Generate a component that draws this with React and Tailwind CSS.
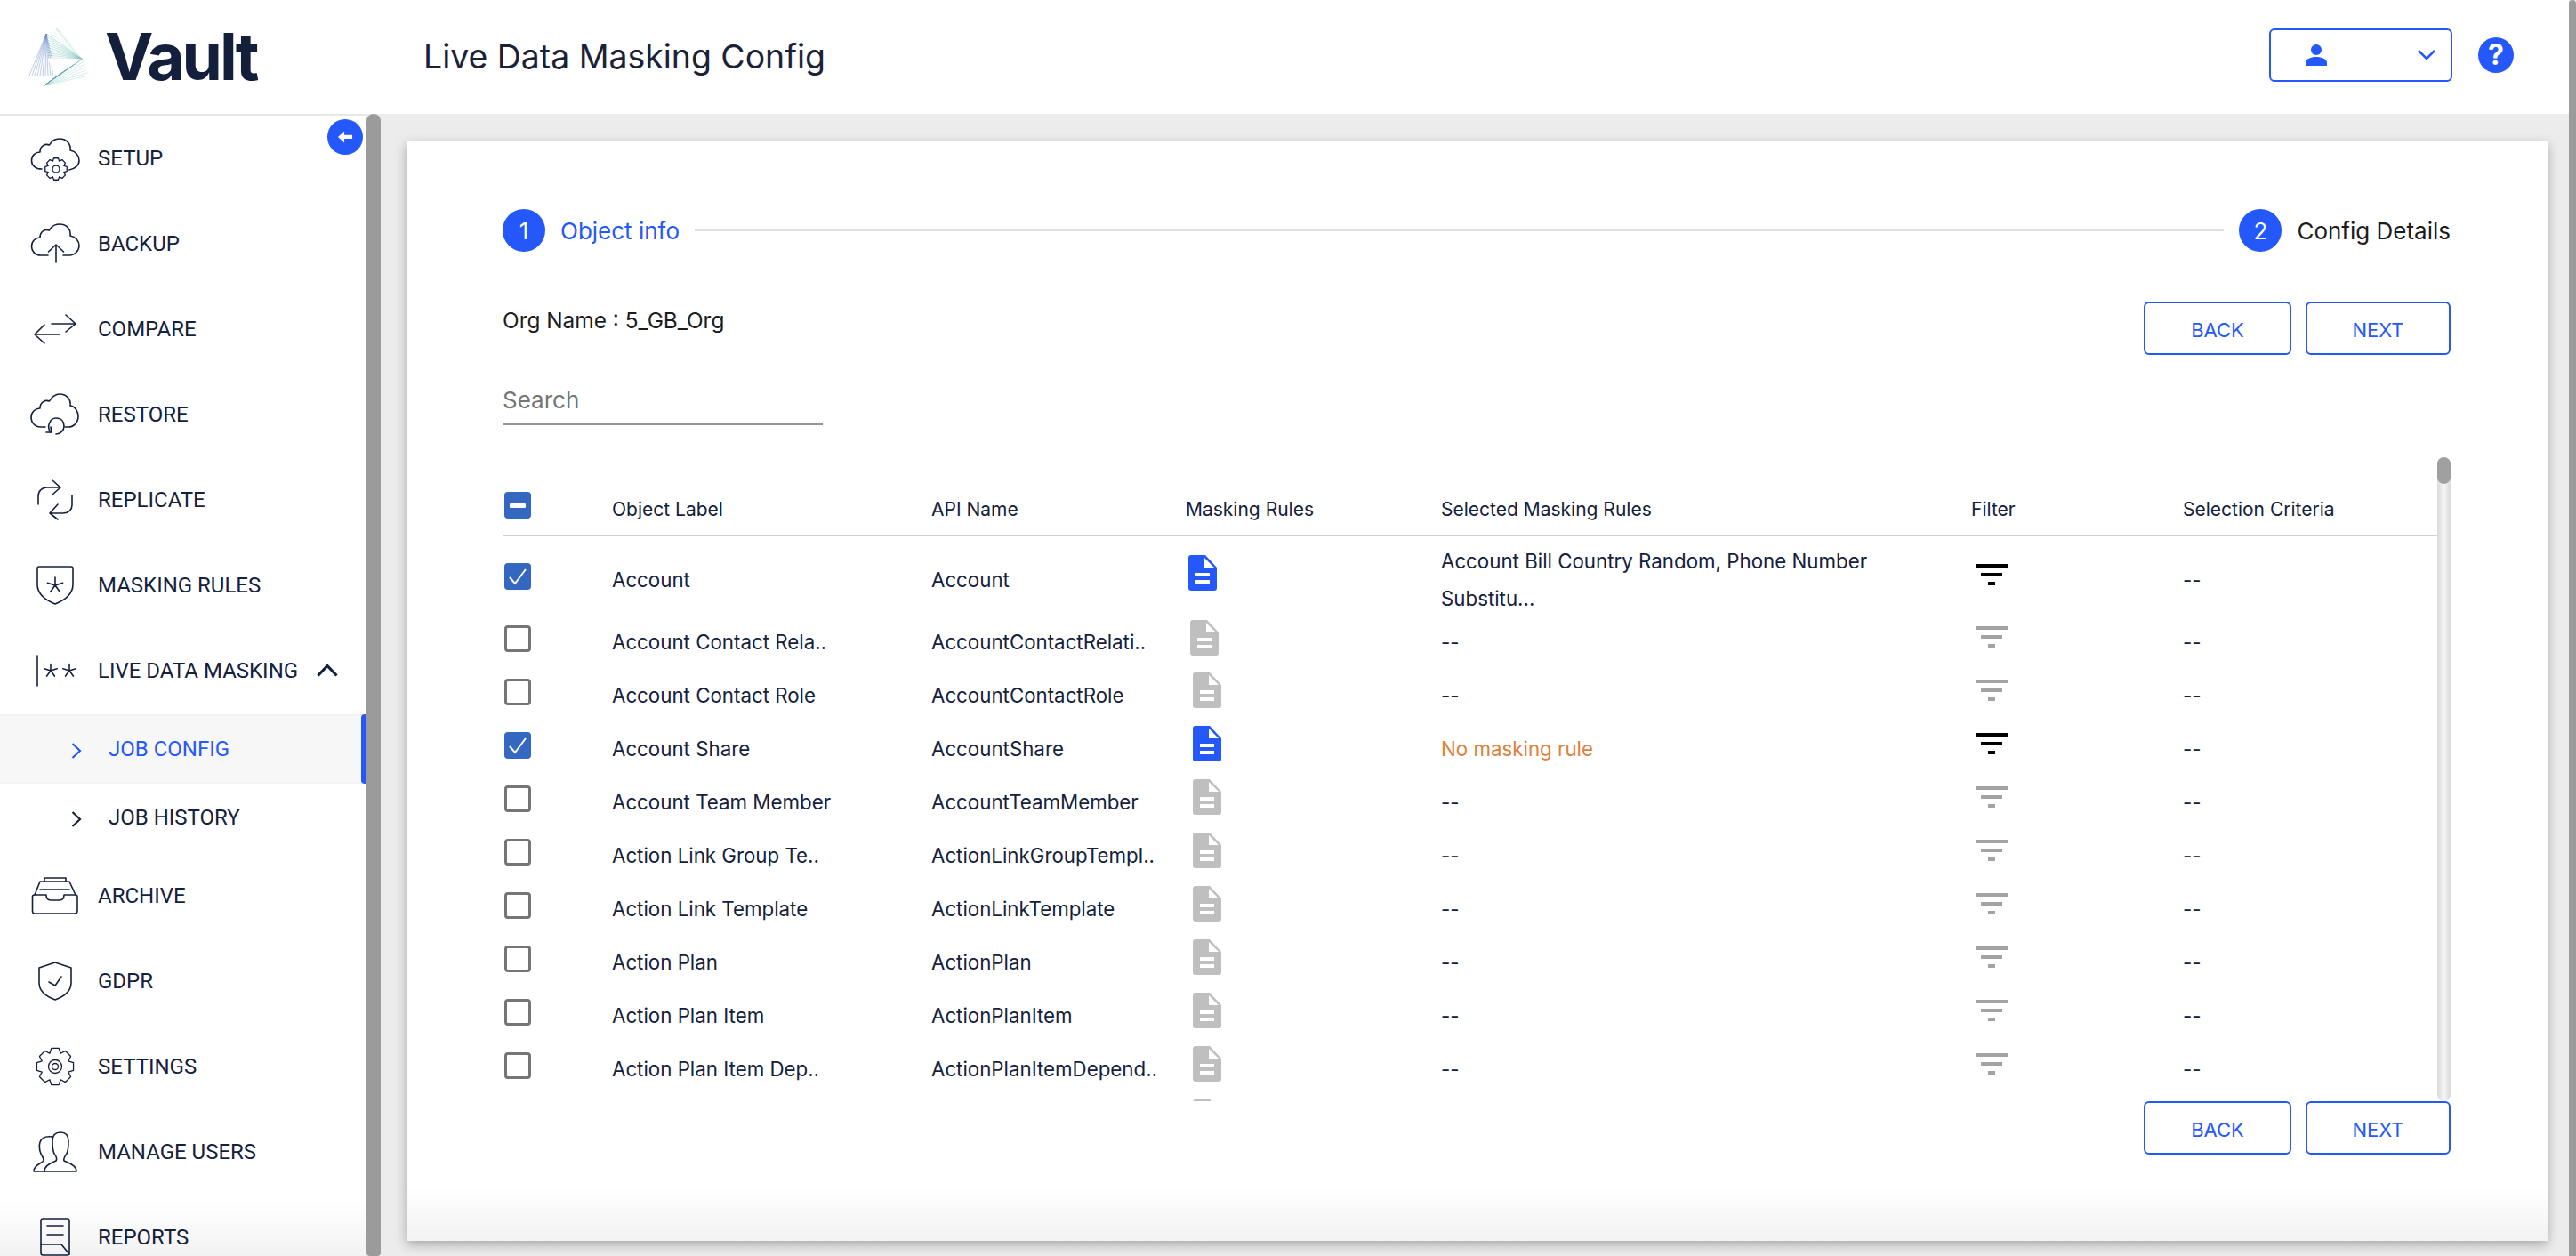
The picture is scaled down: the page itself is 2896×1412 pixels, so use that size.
import React from 'react';

const BLUE = '#2558fb';

// outline of a cog, used by the setup and settings icons
const gearPath = (cx, cy, outer, inner, teeth = 8) => {
    const pts = [];
    const step = (Math.PI * 2) / teeth;
    for (let i = 0; i < teeth; i++) {
        const a = i * step - Math.PI / 2;
        [
            [inner, -0.5],
            [outer, -0.26],
            [outer, 0.26],
            [inner, 0.5],
        ].forEach(([r, k]) => {
            pts.push(`${(cx + r * Math.cos(a + k * step)).toFixed(2)} ${(cy + r * Math.sin(a + k * step)).toFixed(2)}`);
        });
    }
    return `M${pts.join('L')}Z`;
};

const Star = ({ cx, cy, r }) => {
    const d = [0, 1, 2, 3, 4]
        .map((i) => {
            const a = (i * 2 * Math.PI) / 5 - Math.PI / 2;
            return `M${cx} ${cy}L${(cx + r * Math.cos(a)).toFixed(2)} ${(cy + r * Math.sin(a)).toFixed(2)}`;
        })
        .join('');
    return <path d={d} />;
};

// logo is three fans of thin lines turning round a small triangle
const fans = [
    { apex: [60, 35], from: [20, 7], to: [21, 34], color: '#6dbdb0', width: 0.4, n: 10 },
    { apex: [60, 35], from: [20, 7], to: [30, 0], color: '#a5d8cc', width: 0.3, n: 4 },
    { apex: [30, 0], from: [36, 1], to: [54, 30], color: '#b5e0d6', width: 0.3, n: 6 },
    { apex: [20, 7], from: [1, 54], to: [31, 55], color: '#5a7fc0', width: 0.4, n: 11 },
    { apex: [18, 65], from: [31, 55], to: [61, 35], color: '#4f8fb5', width: 0.4, n: 9 },
    { apex: [18, 65], from: [61, 35], to: [68, 54], color: '#7fc8bb', width: 0.3, n: 7 },
];

const Logo = () => (
    <svg viewBox="0 0 70 66" fill="none" className="w-[70px] h-[66px] shrink-0">
        {fans.map((fan, f) =>
            Array.from({ length: fan.n }, (_, i) => {
                const t = i / (fan.n - 1);
                return (
                    <line
                        key={`${f}-${i}`}
                        x1={fan.apex[0]}
                        y1={fan.apex[1]}
                        x2={fan.from[0] + (fan.to[0] - fan.from[0]) * t}
                        y2={fan.from[1] + (fan.to[1] - fan.from[1]) * t}
                        stroke={fan.color}
                        strokeWidth={fan.width}
                    />
                );
            })
        )}
        <path d="M21.500 34.500 H43 L31 54.500 Z" fill="#fff" />
    </svg>
);

const NavIcon = ({ children }) => (
    <svg
        viewBox="0 0 60 60"
        fill="none"
        stroke="#14213d"
        strokeWidth="1.6"
        strokeLinecap="round"
        strokeLinejoin="round"
        className="w-[60px] h-[60px] shrink-0 mt-[1px]"
    >
        {children}
    </svg>
);

const icons = {
    setup: (
        <>
            <path d="M15 42 C8 42 3.5 38 3.5 32.5 C3.5 27 8 23 13 23 C13 16 19 13 23.500 15 C26 10 31 8 35 8 C43 8 48 14 47 21 C53 22 57 27 57 32.500 C57 38 52 42 46 43" />
            <path d={gearPath(31, 42, 12.5, 9.5)} strokeWidth="1.3" />
            <circle cx="31" cy="42" r="4" strokeWidth="1.3" />
        </>
    ),
    backup: (
        <>
            <path d="M22 43 H14 C7 43 3.500 38 3.500 33 C3.500 27 8 23 13 23 C13 16 19 13 23.500 15 C26 10 31 8 35 8 C43 8 48 14 47 21 C53 22 57 27 57 32 C57 38 52 43 46 43 H39" />
            <path d="M31 31 V51 M22.500 39 L31 31 L39.500 39" />
        </>
    ),
    compare: <path d="M26 24 H53 M42 14 L53 24 L42 33 M35 36 H7 M18 25 L7 36 L18 46" />,
    restore: (
        <>
            <path d="M19 44 H14 C7 44 3 39 3 33 C3 27 8 23 13 23 C13 16 19 13 23.500 15 C26 10 31 7 35 7 C43 7 48 13 47 20 C53 21 56 27 56 32 C56 39 51 44 45 44 H41" />
            <path d="M25 50 C20 44 24 34 31 34 C37 34 40 38 40 43 C40 48 36 52 31 52" />
            <path d="M20 50 H26 L25 44" />
        </>
    ),
    replicate: <path d="M11 35 V26 C11 20 15 16 21 16 H36 M27 8 L36 16 L27 24 M49 25 V36 C49 41 45 45 39 45 H24 M33 35 L24 45 L33 52" />,
    masking: (
        <>
            <path d="M12 9 H48 C49 9 50 10 50 11 V29 C50 40 40 47 30 51 C20 47 10 40 10 29 V11 C10 10 11 9 12 9 Z" />
            <Star cx={30} cy={30} r={9} />
        </>
    ),
    live: (
        <>
            <path d="M10 13 V47" />
            <Star cx={25} cy={30} r={7.5} />
            <Star cx={46} cy={30} r={7.5} />
        </>
    ),
    archive: (
        <>
            <path d="M7 29 L13 14 H46 L53 29" />
            <path d="M18 14 V10 H42 V14 M13 23 H46" />
            <path d="M4.500 31 C4.500 30 5 29 7 29 H20 C20 33 22 35 25 35 H35 C38 35 40 33 40 29 H53 C54 29 55 30 55 31 V47 C55 49 54 50 52 50 H7 C5 50 4.500 49 4.500 47 Z" />
        </>
    ),
    gdpr: (
        <>
            <path d="M30 9 L48 15 V32 C48 42 38 48 30 51 C22 48 12 42 12 32 V15 Z" />
            <path d="M23 31 L30 35 L37 25" />
        </>
    ),
    settings: (
        <>
            <path d={gearPath(30, 30, 21, 16)} strokeWidth="1.3" />
            <circle cx="30" cy="30" r="7.500" strokeWidth="1.3" />
            <circle cx="30" cy="30" r="3.500" strokeWidth="1.3" />
        </>
    ),
    users: (
        <>
            <path d="M18 52 C18 45 25 43 31 40 C33 37 31 35 29 32 C27 28 27 24 27 18 C27 11 31 8 36 8 C41 8 45 11 45 18 C45 24 45 28 43 32 C41 35 39 37 40 40 C46 43 54 45 54 52 Z" />
            <path d="M18 52 H6 C6 46 12 44 17 40 C17 37 16 35 14 32 C12 28 12 22 13 19 C15 13 20 12 27 13" />
        </>
    ),
    reports: (
        <>
            <rect x="14" y="9" width="32" height="41" rx="2.500" />
            <path d="M21 17 H39 M21 27 H39 M14 38 H37 L46 49" />
        </>
    ),
};

const Chevron = ({ color }) => (
    <svg viewBox="0 0 12 20" fill="none" stroke={color} strokeWidth="2.2" className="w-3 h-5 shrink-0 mt-1">
        <path d="M1.500 2 L10 10 L1.500 18" />
    </svg>
);

const NavItem = ({ icon, label, children }) => (
    <div className="h-24 flex items-center pl-8 pt-[3px] text-[24px] text-[#14213d] shrink-0">
        <NavIcon>{icons[icon]}</NavIcon>
        <span className="ml-[18px]">{label}</span>
        {children}
    </div>
);

const Sidebar = () => (
    <div className="relative w-[412px] h-full bg-white overflow-hidden flex flex-col shrink-0 font-['Roboto',sans-serif] shadow-[inset_0_2px_0_#e8e8e8]">
        <button className="absolute left-[368px] top-[6px] w-10 h-10 rounded-full flex items-center justify-center" style={{ background: BLUE }}>
            <svg viewBox="0 0 18 14" className="w-[17px] h-[14px]" fill="#fff">
                <path d="M0 7 L7.500 0 V4.500 H17 V9 H7.500 V14 Z" />
            </svg>
        </button>
        <NavItem icon="setup" label="SETUP" />
        <NavItem icon="backup" label="BACKUP" />
        <NavItem icon="compare" label="COMPARE" />
        <NavItem icon="restore" label="RESTORE" />
        <NavItem icon="replicate" label="REPLICATE" />
        <NavItem icon="masking" label="MASKING RULES" />
        <NavItem icon="live" label="LIVE DATA MASKING">
            <svg viewBox="0 0 24 15" fill="none" stroke="#14213d" strokeWidth="3.200" className="w-6 h-[15px] absolute left-[356px]">
                <path d="M1.500 13.500 L12 2.500 L22.500 13.500" />
            </svg>
        </NavItem>
        <div className="relative h-[78px] mt-[3px] shrink-0 flex items-center pl-20 gap-[30px] text-[24px] bg-[#f7f7f7] border-y-2 border-[#f2f2f2]" style={{ color: BLUE }}>
            <Chevron color={BLUE} />
            <span>JOB CONFIG</span>
            <span className="absolute right-0 -top-[2px] -bottom-[2px] w-[6px] rounded-l-[4px]" style={{ background: BLUE }} />
        </div>
        <div className="h-[76px] shrink-0 flex items-center pl-20 gap-[30px] text-[24px] text-[#14213d]">
            <Chevron color="#14213d" />
            <span>JOB HISTORY</span>
        </div>
        <NavItem icon="archive" label="ARCHIVE" />
        <NavItem icon="gdpr" label="GDPR" />
        <NavItem icon="settings" label="SETTINGS" />
        <NavItem icon="users" label="MANAGE USERS" />
        <NavItem icon="reports" label="REPORTS" />
        <div className="absolute left-0 right-0 bottom-0 h-[62px] bg-gradient-to-b from-transparent to-black/5 pointer-events-none" />
    </div>
);

const DocIcon = ({ active, className }) => (
    <svg viewBox="0 0 32 40" className={`w-8 h-10 ${className}`}>
        <path
            d="M3 0 H19 L32 14 V37 A3 3 0 0 1 29 40 H3 A3 3 0 0 1 0 37 V3 A3 3 0 0 1 3 0 Z"
            fill={active ? BLUE : '#bfbfbf'}
        />
        <path d="M18 3 V14 H29 Z M8 20 H24 V24 H8 Z M8 28 H24 V32 H8 Z" fill="#fff" />
    </svg>
);

const FilterIcon = ({ active }) => (
    <svg viewBox="0 0 36 24" className="w-9 h-6 ml-[5px] mb-[12px]" fill={active ? '#000' : '#a3a3a3'}>
        <path d="M0 0 H36 V4 H0 Z M6 10 H30 V14 H6 Z M14 20 H22 V24 H14 Z" />
    </svg>
);

const Checkbox = ({ checked, minus, className = '' }) => {
    if (checked || minus) {
        return (
            <span className={`w-[30px] h-[30px] ml-[2px] rounded-[4px] bg-[#3367c0] flex items-center justify-center ${className}`}>
                {minus ? (
                    <span className="w-[18px] h-[5px] rounded-[1px] bg-white" />
                ) : (
                    <svg viewBox="0 0 30 30" className="w-[30px] h-[30px]" fill="none" stroke="#fff" strokeWidth="2">
                        <path d="M6 16 L12 23 L24 7" />
                    </svg>
                )}
            </span>
        );
    }
    return <span className={`block w-[30px] h-[30px] ml-[2px] rounded-[4px] border-[3px] border-[#757575] ${className}`} />;
};

const COLS = 'grid grid-cols-[123px_359px_286px_287px_596px_238px_1fr] items-center';

const rows = [
    { label: 'Account Contact Rela..', api: 'AccountContactRelati..', doc: 'ml-[5px] mb-[10px]' },
    { label: 'Account Contact Role', api: 'AccountContactRole' },
    { label: 'Account Share', api: 'AccountShare', active: true, rules: 'No masking rule' },
    { label: 'Account Team Member', api: 'AccountTeamMember' },
    { label: 'Action Link Group Te..', api: 'ActionLinkGroupTempl..' },
    { label: 'Action Link Template', api: 'ActionLinkTemplate' },
    { label: 'Action Plan', api: 'ActionPlan' },
    { label: 'Action Plan Item', api: 'ActionPlanItem' },
    { label: 'Action Plan Item Dep..', api: 'ActionPlanItemDepend..' },
];

const BackNext = () => (
    <div className="flex gap-4">
        <button className="w-[166px] h-[60px] pt-[5px] border-2 rounded-md text-[22px] border-[#2558fb] text-[#2558fb]">BACK</button>
        <button className="w-[163px] h-[60px] pt-[5px] border-2 rounded-md text-[22px] border-[#2558fb] text-[#2558fb]">NEXT</button>
    </div>
);

const Table = () => (
    <div className="flex h-[724px]">
        <div className="flex-1 overflow-hidden text-[22.3px] text-[#14213d]">
            <div className={`${COLS} h-[89px] pt-[39px] pb-[8px] border-b-2 border-[#d0d0d8] text-[21px]`}>
                <Checkbox minus className="mb-[10px]" />
                <span>Object Label</span>
                <span>API Name</span>
                <span>Masking Rules</span>
                <span>Selected Masking Rules</span>
                <span>Filter</span>
                <span>Selection Criteria</span>
            </div>
            {/* first row holds the two line rules text so it is taller */}
            <div className={`${COLS} h-[89px] pt-[7px]`}>
                <Checkbox checked className="mb-[8px]" />
                <span>Account</span>
                <span>Account</span>
                <DocIcon active className="ml-[3px] mb-[16px]" />
                <span className="w-[520px] leading-[42px]">Account Bill Country Random, Phone Number Substitu...</span>
                <FilterIcon active />
                <span>--</span>
            </div>
            {rows.map((row) => (
                <div key={row.api} className={`${COLS} h-[60px]`}>
                    <Checkbox checked={row.active} className="mb-[8px]" />
                    <span>{row.label}</span>
                    <span>{row.api}</span>
                    <DocIcon active={row.active} className={row.doc || 'ml-[8px] mb-[12px]'} />
                    {row.rules ? <span className="text-[#e0803a]">{row.rules}</span> : <span>--</span>}
                    <FilterIcon active={row.active} />
                    <span>--</span>
                </div>
            ))}
            <div className={`${COLS} h-[60px]`}>
                <span />
                <span />
                <span />
                <DocIcon className="ml-[8px] mb-[12px]" />
            </div>
        </div>
        <div className="w-[15px] relative rounded-full bg-gradient-to-r from-[#d8d8d8] via-[#f6f6f6] to-[#d8d8d8]">
            <div className="h-[30px] rounded-full bg-[#a0a0a0]" />
        </div>
    </div>
);

const App = () => (
    <div className="w-[2896px] h-[1412px] overflow-hidden flex font-['Inter',sans-serif] bg-[#ececec]">
        <div className="flex-1 flex flex-col min-w-0">
            <header className="h-32 bg-white flex items-center shrink-0">
                <div className="w-[476px] flex items-center pl-8 shrink-0">
                    <Logo />
                    <span className="text-[73px] font-bold tracking-[-3px] text-[#141f3c] ml-[16px]">Vault</span>
                </div>
                <h1 className="text-[37.400px] text-[#1a2238]">Live Data Masking Config</h1>
                <div className="ml-auto flex items-center gap-[29px] pr-[62px] -mt-[5px]">
                    <button className="w-[206px] h-[60px] border-2 rounded-md border-[#2558fb] flex items-center justify-between pl-[39px] pr-[17px]">
                        <svg viewBox="0 0 24 24" className="w-6 h-6" fill={BLUE}>
                            <circle cx="12" cy="6" r="6" />
                            <path d="M0 24 V21 C0 16 6 14 12 14 C18 14 24 16 24 21 V24 Z" />
                        </svg>
                        <svg viewBox="0 0 20 12" className="w-5 h-3" fill="none" stroke={BLUE} strokeWidth="2.500">
                            <path d="M1 1 L10 10 L19 1" />
                        </svg>
                    </button>
                    <span className="w-10 h-10 rounded-full bg-[#2558fb] text-white font-bold text-[32px] flex items-center justify-center">?</span>
                </div>
            </header>
            <div className="flex-1 flex min-h-0">
                <Sidebar />
                <div className="w-4 h-full rounded-b-md rounded-t-xl bg-[#9c9b9b] shrink-0" />
                <main className="flex-1 pl-[29px] pr-6 pt-[31px] pb-[17px] min-w-0">
                    <div className="relative h-full bg-white shadow-[0_4px_12px_rgba(0,0,0,0.3)] pt-[76px] pl-[108px] pr-[109px]">
                        <div className="flex items-center h-12">
                            <span className="w-12 h-12 rounded-full bg-[#2558fb] text-white text-[26px] flex items-center justify-center">1</span>
                            <span className="ml-[17px] text-[26px] text-[#2558fb]">Object info</span>
                            <span className="flex-1 h-[2px] bg-[#e0e0e0] mx-[17px]" />
                            <span className="w-12 h-12 rounded-full bg-[#2558fb] text-white text-[26px] flex items-center justify-center">2</span>
                            <span className="ml-[17px] text-[26px] text-[#1c1c1c]">Config Details</span>
                        </div>
                        <div className="flex justify-between items-start mt-[56px]">
                            <span className="text-[24.400px] text-[#1c1c1c] leading-[40px] mt-[1px]">Org Name : 5_GB_Org</span>
                            <BackNext />
                        </div>
                        <div className="w-[360px] h-[52px] mt-[27px] border-b-2 border-[#949494] text-[26px] leading-[48px] text-[#757575]">Search</div>
                        <div className="mt-[36px]">
                            <Table />
                        </div>
                        <div className="flex justify-end">
                            <BackNext />
                        </div>
                        <div className="absolute left-0 right-0 bottom-0 h-[62px] bg-gradient-to-b from-transparent to-black/5 pointer-events-none" />
                    </div>
                </main>
            </div>
        </div>
        <div className="w-2 h-full rounded-t-md bg-[#9b9b9b] shrink-0" />
    </div>
);

export default App;
